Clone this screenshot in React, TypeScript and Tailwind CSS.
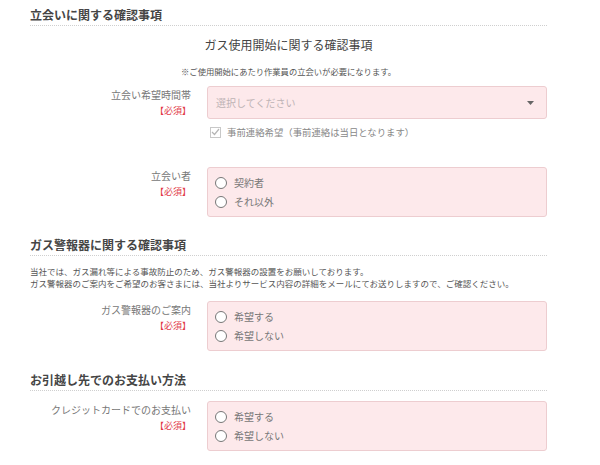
import React from 'react'

const Required = () => (
  <span className="block text-[9px] leading-[14px] mt-[2px] text-[#e23a48]">【必須】</span>
)

const SectionTitle: React.FC<{ text: string; className?: string }> = ({ text, className }) => (
  <h2
    className={`text-[12px] leading-[18px] font-bold text-[#454545] pb-[1px] border-b border-dotted border-[#cfcfcf] ${className ?? ''}`}
  >
    {text}
  </h2>
)

const Row: React.FC<{ label: string; className?: string; children: React.ReactNode }> = ({
  label,
  className,
  children,
}) => (
  <div className={`flex ${className ?? ''}`}>
    <div className="w-[164px] shrink-0 text-right pt-[2px] pr-[3px]">
      <span className="block text-[10px] leading-[14px] text-[#777]">{label}</span>
      <Required />
    </div>
    <div className="ml-[13px] w-[340px]">{children}</div>
  </div>
)

const RadioGroup: React.FC<{ options: string[] }> = ({ options }) => (
  <div className="h-[50px] bg-[#fde9eb] border border-[#edcdd0] rounded-[3px] pl-[7px] pt-[5px]">
    {options.map((o) => (
      <label key={o} className="flex items-center h-[19px]">
        <span className="w-[12px] h-[12px] rounded-full border border-[#777] bg-white" />
        <span className="ml-[7px] text-[10px] text-[#777]">{o}</span>
      </label>
    ))}
  </div>
)

export default function App() {
  return (
    <div className="w-[600px] h-[465px] bg-white font-['Noto_Sans_CJK_JP',sans-serif] overflow-hidden">
      <div className="ml-[30px] w-[517px] pt-[6px]">
        <SectionTitle text="立会いに関する確認事項" />
        <p className="mt-[10px] text-center text-[12px] leading-[18px] text-[#444]">
          ガス使用開始に関する確認事項
        </p>
        <p className="mt-[11px] text-center text-[8.3px] leading-[12px] text-[#555]">
          ※ご使用開始にあたり作業員の立会いが必要になります。
        </p>

        <Row label="立会い希望時間帯" className="mt-[9px]">
          <div className="h-[33px] bg-[#fde9eb] border border-[#edcdd0] rounded-[3px] flex items-center justify-between pl-[8px] pr-[12px]">
            <span className="text-[10px] text-[#bdb3b5]">選択してください</span>
            <svg width="7" height="4" viewBox="0 0 7 4">
              <path d="M0 0 L7 0 L3.5 4 Z" fill="#666" />
            </svg>
          </div>
          <div className="flex items-center h-[14px] mt-[6px] pl-[3px]">
            <span className="w-[11px] h-[11px] border border-[#c8c8c8] bg-white flex items-center justify-center">
              <svg width="9" height="8" viewBox="0 0 9 8">
                <path d="M1 4 L3.5 6.5 L8 1" stroke="#b5b5b5" strokeWidth="1.2" fill="none" />
              </svg>
            </span>
            <span className="ml-[6px] text-[9.4px] text-[#888]">
              事前連絡希望（事前連絡は当日となります）
            </span>
          </div>
        </Row>

        <Row label="立会い者" className="mt-[28px]">
          <RadioGroup options={['契約者', 'それ以外']} />
        </Row>

        <SectionTitle text="ガス警報器に関する確認事項" className="mt-[19px]" />
        <div className="mt-[9px] text-[8.5px] leading-[12px] text-[#555]">
          <p>当社では、ガス漏れ等による事故防止のため、ガス警報器の設置をお願いしております。</p>
          <p className="whitespace-nowrap">
            ガス警報器のご案内をご希望のお客さまには、当社よりサービス内容の詳細をメールにてお送りしますので、ご確認ください。
          </p>
        </div>

        <Row label="ガス警報器のご案内" className="mt-[12px]">
          <RadioGroup options={['希望する', '希望しない']} />
        </Row>

        <SectionTitle text="お引越し先でのお支払い方法" className="mt-[20px]" />

        <Row label="クレジットカードでのお支払い" className="mt-[10px]">
          <RadioGroup options={['希望する', '希望しない']} />
        </Row>
      </div>
    </div>
  )
}
